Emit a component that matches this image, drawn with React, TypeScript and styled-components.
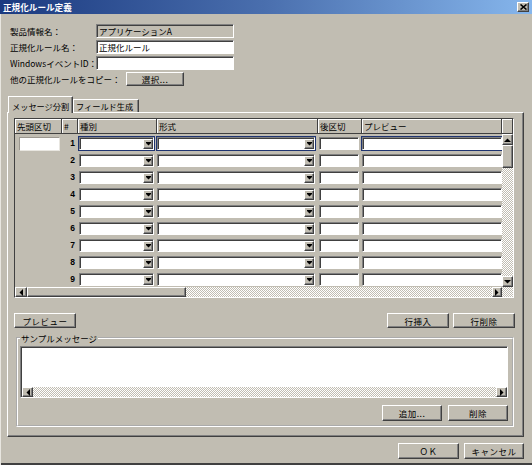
import React from "react";
import styled, { createGlobalStyle, css } from "styled-components";

const c = {
  face: "#c1bdb2",
  light: "#ffffff",
  shadow: "#808080",
  dark: "#404040",
  focus: "#1f3470",
};

// 列幅: 先頭区切 / # / 種別 / 形式 / 後区切 / プレビュー
const COLS = "47px 16px 79px 161px 44px 140px";

const GlobalStyle = createGlobalStyle`
  html, body { margin: 0; padding: 0; background: ${c.face}; }
  body {
    font-family: "Noto Sans CJK JP", "Noto Sans", sans-serif;
    font-size: 8.5px;
    line-height: 12px;
    color: #000;
  }
  *, *::before, *::after { box-sizing: border-box; }
`;

const raised = css`
  border: 1px solid;
  border-color: ${c.light} ${c.dark} ${c.dark} ${c.light};
  box-shadow: inset -1px -1px ${c.shadow};
  background: ${c.face};
`;

const sunken = css`
  border: 1px solid;
  border-color: ${c.shadow} ${c.light} ${c.light} ${c.shadow};
  box-shadow: inset 1px 1px ${c.dark};
`;

const dither = css`
  background: repeating-conic-gradient(${c.face} 0% 25%, #fff 0% 50%) 0 0 / 2px 2px;
`;

const Window = styled.div`
  width: 532px;
  height: 465px;
  background: ${c.face};
  box-shadow: inset 1px 0 #e8e6e0, inset 0 -2px ${c.dark};
  display: flex;
  flex-direction: column;
  overflow: hidden;
`;

const TitleBar = styled.div`
  height: 14px;
  flex: none;
  display: flex;
  align-items: center;
  justify-content: space-between;
  padding: 0 3px;
  background: linear-gradient(90deg, #1b3a80 0%, #4a6fae 50%, #86b6ec 100%);
  color: #fff;
  font-weight: bold;
  font-size: 8.6px;
  line-height: 14px;
`;

const CloseButton = styled.div`
  ${raised};
  width: 12px;
  height: 10px;
  display: flex;
  align-items: center;
  justify-content: center;
`;

const Form = styled.div`
  display: grid;
  grid-template-columns: 86px 138px;
  grid-auto-rows: 14px;
  row-gap: 2px;
  align-items: center;
  margin: 10px 0 0 10px;
`;

const Label = styled.span`
  white-space: nowrap;
`;

const Field = styled.div<{ $readOnly?: boolean }>`
  ${sunken};
  height: 14px;
  background: ${(p) => (p.$readOnly ? c.face : "#fff")};
  padding: 0 2px;
  line-height: 12px;
  white-space: nowrap;
  overflow: hidden;
`;

const CopyRow = styled.div`
  grid-column: 1 / -1;
  display: flex;
  align-items: center;
`;

const CopyLabel = styled(Label)`
  width: 116px;
`;

const Button = styled.button<{ $w: number; $h?: number }>`
  ${raised};
  width: ${(p) => p.$w}px;
  height: ${(p) => p.$h ?? 15}px;
  margin: 0;
  padding: 0;
  font: inherit;
  color: #000;
  display: flex;
  align-items: center;
  justify-content: center;
  letter-spacing: 0.5px;
  white-space: nowrap;
`;

const TabStrip = styled.div`
  display: flex;
  align-items: flex-end;
  height: 16px;
  margin: 10px 0 0 8px;
  position: relative;
  z-index: 1;
`;

const Tab = styled.div<{ $active?: boolean; $w: number }>`
  width: ${(p) => p.$w}px;
  height: ${(p) => (p.$active ? 17 : 13)}px;
  margin-bottom: ${(p) => (p.$active ? -1 : 0)}px;
  border: 1px solid;
  border-bottom: none;
  border-color: ${c.light} ${c.dark} transparent ${c.light};
  box-shadow: inset -1px 0 ${c.shadow};
  background: ${c.face};
  padding: ${(p) => (p.$active ? "2px 0 0 3px" : "0 0 0 2px")};
  font-size: 8.2px;
  line-height: ${(p) => (p.$active ? 14 : 12)}px;
  white-space: nowrap;
`;

const Panel = styled.div`
  width: 517px;
  height: 325px;
  margin-left: 7px;
  border: 1px solid;
  border-color: ${c.light} ${c.dark} ${c.dark} ${c.light};
  box-shadow: inset -1px -1px ${c.shadow};
  padding: 5px 0 0 6px;
  display: flex;
  flex-direction: column;
`;

const GridBox = styled.div`
  width: 500px;
  height: 180px;
  border: 1px solid;
  border-color: ${c.dark} ${c.light} ${c.light} ${c.dark};
  display: flex;
  flex-direction: column;
`;

const Header = styled.div`
  display: grid;
  grid-template-columns: ${COLS} 11px;
  height: 15px;
`;

const HeadCell = styled.div`
  background: ${c.face};
  border-right: 1px solid ${c.dark};
  border-bottom: 1px solid ${c.dark};
  box-shadow: inset 1px 1px ${c.light};
  padding-left: 2px;
  line-height: 14px;
  white-space: nowrap;
  overflow: hidden;
`;

const GridBody = styled.div`
  display: flex;
  height: 153px;
`;

const Rows = styled.div`
  width: 487px;
  display: flex;
  flex-direction: column;
`;

const Row = styled.div`
  display: grid;
  grid-template-columns: ${COLS};
  height: 17px;
  padding-top: 3px;
  align-items: start;
`;

const RowNo = styled.div`
  font-family: "Liberation Sans", sans-serif;
  font-weight: bold;
  font-size: 8.5px;
  line-height: 13px;
  text-align: right;
  padding-right: 3px;
`;

const TextCell = styled.div<{ $sel?: boolean; $m: string }>`
  ${sunken};
  height: 13px;
  margin: ${(p) => p.$m};
  background: #fff;
  outline: ${(p) => (p.$sel ? `1px solid ${c.focus}` : "none")};
`;

const HeadField = styled.div`
  height: 14px;
  margin: 0 2px 0 4px;
  background: #fff;
  border: 1px solid;
  border-color: #9c9890 #e8e6e0 #e8e6e0 #9c9890;
`;

const Combo = styled.div<{ $sel?: boolean; $m: string }>`
  ${sunken};
  height: 13px;
  margin: ${(p) => p.$m};
  padding-top: 1px;
  background: #fff;
  display: flex;
  justify-content: flex-end;
  outline: ${(p) => (p.$sel ? `1px solid ${c.focus}` : "none")};
`;

const DropButton = styled.div`
  ${raised};
  width: 10px;
  height: 10px;
  display: flex;
  align-items: center;
  justify-content: center;
`;

const VScroll = styled.div`
  width: 11px;
  display: flex;
  flex-direction: column;
`;

const ScrollButton = styled.div<{ $w: number; $h: number }>`
  ${raised};
  flex: none;
  width: ${(p) => p.$w}px;
  height: ${(p) => p.$h}px;
  display: flex;
  align-items: center;
  justify-content: center;
`;

const Track = styled.div`
  ${dither};
  flex: 1;
`;

const HScroll = styled.div`
  display: flex;
  height: 10px;
  flex: none;
`;

const Corner = styled.div`
  ${dither};
  width: 11px;
  flex: none;
`;

const ActionRow = styled.div`
  display: flex;
  width: 501px;
  gap: 4px;
  margin-top: 15px;
`;

const Spacer = styled.div`
  flex: 1;
`;

const Group = styled.fieldset`
  width: 498px;
  margin: 4px 0 0 2px;
  padding: 2px 4px 4px 2px;
  border: 2px groove #fff;
  min-width: 0;
  display: flex;
  flex-direction: column;
`;

const Legend = styled.legend`
  padding: 0 1px;
  margin: 0;
  line-height: 12px;
`;

const SampleBox = styled.div`
  ${sunken};
  height: 52px;
  background: #fff;
  display: flex;
  flex-direction: column;
  justify-content: flex-end;
  padding: 1px 0 0 1px;
`;

const GroupButtons = styled.div`
  display: flex;
  justify-content: flex-end;
  gap: 6px;
  margin-top: 7px;
`;

const Footer = styled.div`
  display: flex;
  justify-content: flex-end;
  gap: 5px;
  margin-top: 6px;
  padding-right: 8px;
`;

const Arrow = ({ dir }: { dir: "up" | "down" | "left" | "right" }) => {
  const pts = {
    up: "0,4 7,4 3.5,0.5",
    down: "0,0 7,0 3.5,3.5",
    left: "4,0 4,7 0.5,3.5",
    right: "0,0 0,7 3.5,3.5",
  }[dir];
  const vertical = dir === "up" || dir === "down";
  return (
    <svg width={vertical ? 7 : 4} height={vertical ? 4 : 7} viewBox={vertical ? "0 0 7 4" : "0 0 4 7"}>
      <polygon points={pts} fill="#000" />
    </svg>
  );
};

const DropArrow = () => (
  <svg width="5" height="4" viewBox="0 0 5 4">
    <rect x="0" y="0" width="5" height="1" fill="#000" />
    <polygon points="0,1 5,1 2.5,3.5" fill="#000" />
  </svg>
);

const headers = ["先頭区切", "#", "種別", "形式", "後区切", "プレビュー", ""];
const rows = [1, 2, 3, 4, 5, 6, 7, 8, 9];

export default function App() {
  return (
    <>
      <GlobalStyle />
      <Window>
        <TitleBar>
          <span>正規化ルール定義</span>
          <CloseButton>
            <svg width="7" height="6" viewBox="0 0 7 6">
              <path d="M0.5 0.5 L6.5 5.5 M6.5 0.5 L0.5 5.5" stroke="#000" strokeWidth="1.6" />
            </svg>
          </CloseButton>
        </TitleBar>

        <Form>
          <Label>製品情報名：</Label>
          <Field $readOnly>アプリケーションA</Field>
          <Label>正規化ルール名：</Label>
          <Field>正規化ルール</Field>
          <Label>WindowsイベントID：</Label>
          <Field />
          <CopyRow>
            <CopyLabel>他の正規化ルールをコピー：</CopyLabel>
            <Button $w={58} $h={14}>選択...</Button>
          </CopyRow>
        </Form>

        <TabStrip>
          <Tab $active $w={65}>メッセージ分割</Tab>
          <Tab $w={66}>フィールド生成</Tab>
        </TabStrip>

        <Panel>
          <GridBox>
            <Header>
              {headers.map((h, i) => (
                <HeadCell key={i}>{h}</HeadCell>
              ))}
            </Header>
            <GridBody>
              <Rows>
                {rows.map((n) => {
                  const sel = n === 1;
                  return (
                    <Row key={n}>
                      {sel ? <HeadField /> : <div />}
                      <RowNo>{n}</RowNo>
                      <Combo $sel={sel} $m="0 3px 0 1px">
                        <DropButton>
                          <DropArrow />
                        </DropButton>
                      </Combo>
                      <Combo $sel={sel} $m="0 3px 0 0">
                        <DropButton>
                          <DropArrow />
                        </DropButton>
                      </Combo>
                      <TextCell $m="0 3px 0 1px" />
                      <TextCell $sel={sel} $m="0" />
                    </Row>
                  );
                })}
              </Rows>
              <VScroll>
                <ScrollButton $w={11} $h={11}>
                  <Arrow dir="up" />
                </ScrollButton>
                <ScrollButton $w={11} $h={23} />
                <Track />
                <ScrollButton $w={11} $h={11}>
                  <Arrow dir="down" />
                </ScrollButton>
              </VScroll>
            </GridBody>
            <HScroll>
              <ScrollButton $w={12} $h={10}>
                <Arrow dir="left" />
              </ScrollButton>
              <ScrollButton $w={159} $h={10} />
              <Track />
              <ScrollButton $w={10} $h={10}>
                <Arrow dir="right" />
              </ScrollButton>
              <Corner />
            </HScroll>
          </GridBox>

          <ActionRow>
            <Button $w={62}>プレビュー</Button>
            <Spacer />
            <Button $w={62}>行挿入</Button>
            <Button $w={62}>行削除</Button>
          </ActionRow>

          <Group>
            <Legend>サンプルメッセージ</Legend>
            <SampleBox>
              <HScroll>
                <ScrollButton $w={11} $h={10}>
                  <Arrow dir="left" />
                </ScrollButton>
                <Track />
                <ScrollButton $w={11} $h={10}>
                  <Arrow dir="right" />
                </ScrollButton>
              </HScroll>
            </SampleBox>
            <GroupButtons>
              <Button $w={60} $h={16}>追加...</Button>
              <Button $w={60} $h={16}>削除</Button>
            </GroupButtons>
          </Group>
        </Panel>

        <Footer>
          <Button $w={61} $h={16}>ＯＫ</Button>
          <Button $w={60} $h={16}>キャンセル</Button>
        </Footer>
      </Window>
    </>
  );
}
